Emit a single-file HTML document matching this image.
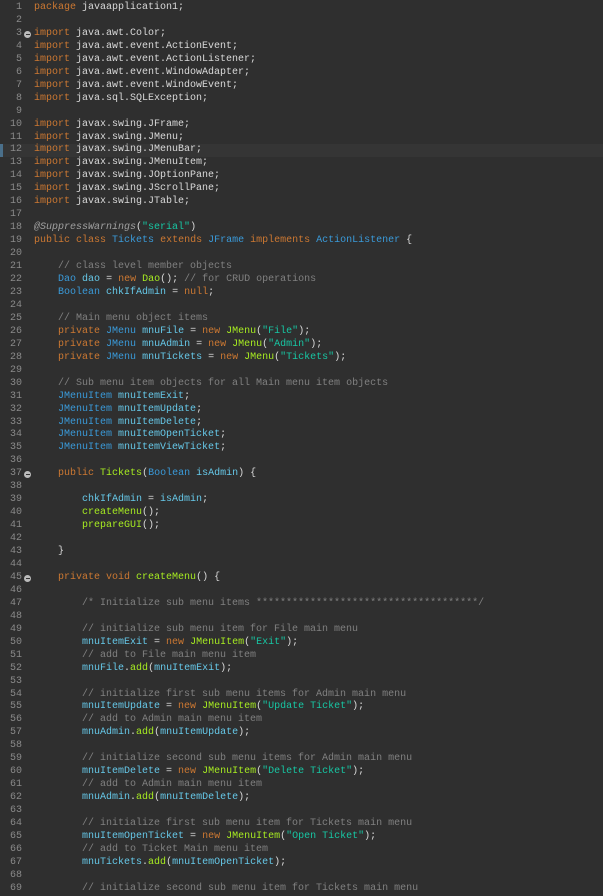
<!DOCTYPE html>
<html><head><meta charset="utf-8"><style>
html,body{margin:0;padding:0;background:#2f2f2f;width:603px;height:894px;overflow:hidden}
#ed{position:absolute;left:0;top:2px;width:603px;font-family:"Liberation Mono",monospace;font-size:10px;line-height:12.96px;color:#d9d9d9}
.l{position:relative;height:12.96px;white-space:pre}
.n{display:inline-block;width:22px;text-align:right;color:#8a8a8a;margin-right:12px}
.k{color:#cc7832}.t{color:#3a9ad9}.f{color:#66c8e8}.m{color:#a7ec21}.s{color:#17c6a3}.c{color:#808080}.a{color:#a0a0a0;font-style:italic}
.fold{position:absolute;left:24px;top:3px;width:7px;height:7px;border-radius:50%;background:#bbb}
.fold:after{content:"";position:absolute;left:1.5px;top:3px;width:4px;height:1px;background:#333}
.hl{background:#353535}
.mk{position:absolute;left:0;top:0;width:3px;height:13px;background:#4a6f8a}
</style></head><body><div id="ed">
<div class="l"><span class="n">1</span><span class="k">package</span> javaapplication1;</div>
<div class="l"><span class="n">2</span></div>
<div class="l"><span class="fold"></span><span class="n">3</span><span class="k">import</span> java.awt.Color;</div>
<div class="l"><span class="n">4</span><span class="k">import</span> java.awt.event.ActionEvent;</div>
<div class="l"><span class="n">5</span><span class="k">import</span> java.awt.event.ActionListener;</div>
<div class="l"><span class="n">6</span><span class="k">import</span> java.awt.event.WindowAdapter;</div>
<div class="l"><span class="n">7</span><span class="k">import</span> java.awt.event.WindowEvent;</div>
<div class="l"><span class="n">8</span><span class="k">import</span> java.sql.SQLException;</div>
<div class="l"><span class="n">9</span></div>
<div class="l"><span class="n">10</span><span class="k">import</span> javax.swing.JFrame;</div>
<div class="l"><span class="n">11</span><span class="k">import</span> javax.swing.JMenu;</div>
<div class="l hl"><span class="mk"></span><span class="n">12</span><span class="k">import</span> javax.swing.JMenuBar;</div>
<div class="l"><span class="n">13</span><span class="k">import</span> javax.swing.JMenuItem;</div>
<div class="l"><span class="n">14</span><span class="k">import</span> javax.swing.JOptionPane;</div>
<div class="l"><span class="n">15</span><span class="k">import</span> javax.swing.JScrollPane;</div>
<div class="l"><span class="n">16</span><span class="k">import</span> javax.swing.JTable;</div>
<div class="l"><span class="n">17</span></div>
<div class="l"><span class="n">18</span><span class="a">@SuppressWarnings</span>(<span class="s">"serial"</span>)</div>
<div class="l"><span class="n">19</span><span class="k">public class</span> <span class="t">Tickets</span> <span class="k">extends</span> <span class="t">JFrame</span> <span class="k">implements</span> <span class="t">ActionListener</span> {</div>
<div class="l"><span class="n">20</span></div>
<div class="l"><span class="n">21</span>    <span class="c">// class level member objects</span></div>
<div class="l"><span class="n">22</span>    <span class="t">Dao</span> <span class="f">dao</span> = <span class="k">new</span> <span class="m">Dao</span>(); <span class="c">// for CRUD operations</span></div>
<div class="l"><span class="n">23</span>    <span class="t">Boolean</span> <span class="f">chkIfAdmin</span> = <span class="k">null</span>;</div>
<div class="l"><span class="n">24</span></div>
<div class="l"><span class="n">25</span>    <span class="c">// Main menu object items</span></div>
<div class="l"><span class="n">26</span>    <span class="k">private</span> <span class="t">JMenu</span> <span class="f">mnuFile</span> = <span class="k">new</span> <span class="m">JMenu</span>(<span class="s">"File"</span>);</div>
<div class="l"><span class="n">27</span>    <span class="k">private</span> <span class="t">JMenu</span> <span class="f">mnuAdmin</span> = <span class="k">new</span> <span class="m">JMenu</span>(<span class="s">"Admin"</span>);</div>
<div class="l"><span class="n">28</span>    <span class="k">private</span> <span class="t">JMenu</span> <span class="f">mnuTickets</span> = <span class="k">new</span> <span class="m">JMenu</span>(<span class="s">"Tickets"</span>);</div>
<div class="l"><span class="n">29</span></div>
<div class="l"><span class="n">30</span>    <span class="c">// Sub menu item objects for all Main menu item objects</span></div>
<div class="l"><span class="n">31</span>    <span class="t">JMenuItem</span> <span class="f">mnuItemExit</span>;</div>
<div class="l"><span class="n">32</span>    <span class="t">JMenuItem</span> <span class="f">mnuItemUpdate</span>;</div>
<div class="l"><span class="n">33</span>    <span class="t">JMenuItem</span> <span class="f">mnuItemDelete</span>;</div>
<div class="l"><span class="n">34</span>    <span class="t">JMenuItem</span> <span class="f">mnuItemOpenTicket</span>;</div>
<div class="l"><span class="n">35</span>    <span class="t">JMenuItem</span> <span class="f">mnuItemViewTicket</span>;</div>
<div class="l"><span class="n">36</span></div>
<div class="l"><span class="fold"></span><span class="n">37</span>    <span class="k">public</span> <span class="m">Tickets</span>(<span class="t">Boolean</span> <span class="f">isAdmin</span>) {</div>
<div class="l"><span class="n">38</span></div>
<div class="l"><span class="n">39</span>        <span class="f">chkIfAdmin</span> = <span class="f">isAdmin</span>;</div>
<div class="l"><span class="n">40</span>        <span class="m">createMenu</span>();</div>
<div class="l"><span class="n">41</span>        <span class="m">prepareGUI</span>();</div>
<div class="l"><span class="n">42</span></div>
<div class="l"><span class="n">43</span>    }</div>
<div class="l"><span class="n">44</span></div>
<div class="l"><span class="fold"></span><span class="n">45</span>    <span class="k">private void</span> <span class="m">createMenu</span>() {</div>
<div class="l"><span class="n">46</span></div>
<div class="l"><span class="n">47</span>        <span class="c">/* Initialize sub menu items *************************************/</span></div>
<div class="l"><span class="n">48</span></div>
<div class="l"><span class="n">49</span>        <span class="c">// initialize sub menu item for File main menu</span></div>
<div class="l"><span class="n">50</span>        <span class="f">mnuItemExit</span> = <span class="k">new</span> <span class="m">JMenuItem</span>(<span class="s">"Exit"</span>);</div>
<div class="l"><span class="n">51</span>        <span class="c">// add to File main menu item</span></div>
<div class="l"><span class="n">52</span>        <span class="f">mnuFile</span>.<span class="m">add</span>(<span class="f">mnuItemExit</span>);</div>
<div class="l"><span class="n">53</span></div>
<div class="l"><span class="n">54</span>        <span class="c">// initialize first sub menu items for Admin main menu</span></div>
<div class="l"><span class="n">55</span>        <span class="f">mnuItemUpdate</span> = <span class="k">new</span> <span class="m">JMenuItem</span>(<span class="s">"Update Ticket"</span>);</div>
<div class="l"><span class="n">56</span>        <span class="c">// add to Admin main menu item</span></div>
<div class="l"><span class="n">57</span>        <span class="f">mnuAdmin</span>.<span class="m">add</span>(<span class="f">mnuItemUpdate</span>);</div>
<div class="l"><span class="n">58</span></div>
<div class="l"><span class="n">59</span>        <span class="c">// initialize second sub menu items for Admin main menu</span></div>
<div class="l"><span class="n">60</span>        <span class="f">mnuItemDelete</span> = <span class="k">new</span> <span class="m">JMenuItem</span>(<span class="s">"Delete Ticket"</span>);</div>
<div class="l"><span class="n">61</span>        <span class="c">// add to Admin main menu item</span></div>
<div class="l"><span class="n">62</span>        <span class="f">mnuAdmin</span>.<span class="m">add</span>(<span class="f">mnuItemDelete</span>);</div>
<div class="l"><span class="n">63</span></div>
<div class="l"><span class="n">64</span>        <span class="c">// initialize first sub menu item for Tickets main menu</span></div>
<div class="l"><span class="n">65</span>        <span class="f">mnuItemOpenTicket</span> = <span class="k">new</span> <span class="m">JMenuItem</span>(<span class="s">"Open Ticket"</span>);</div>
<div class="l"><span class="n">66</span>        <span class="c">// add to Ticket Main menu item</span></div>
<div class="l"><span class="n">67</span>        <span class="f">mnuTickets</span>.<span class="m">add</span>(<span class="f">mnuItemOpenTicket</span>);</div>
<div class="l"><span class="n">68</span></div>
<div class="l"><span class="n">69</span>        <span class="c">// initialize second sub menu item for Tickets main menu</span></div>
</div></body></html>
